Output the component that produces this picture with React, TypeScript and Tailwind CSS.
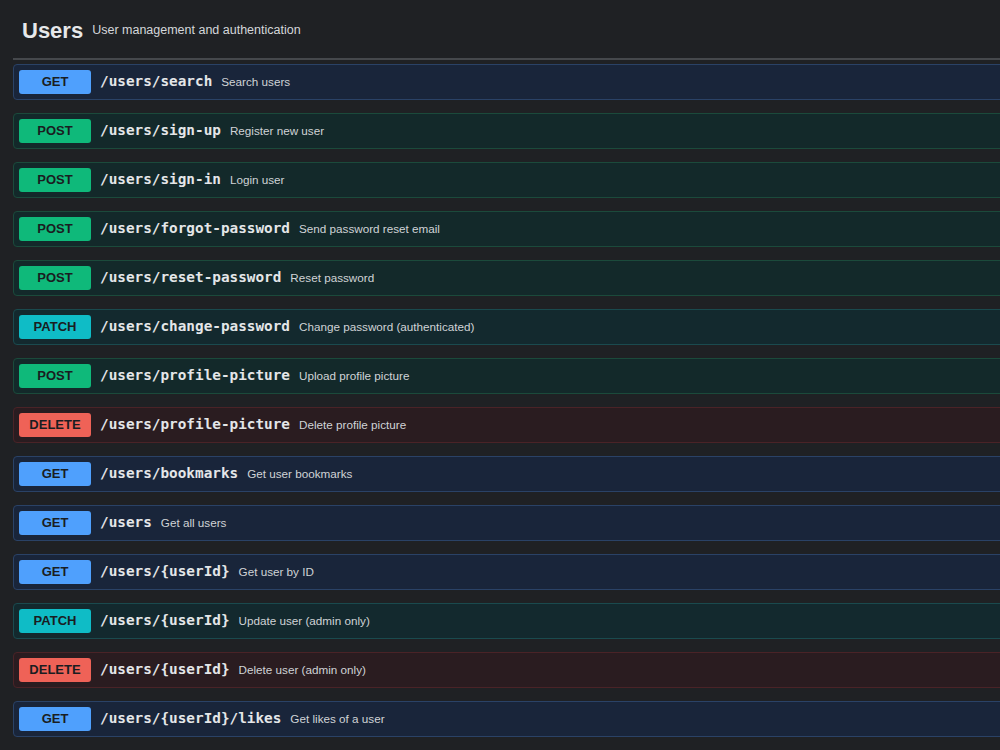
const endpoints: { method: string; path: string; summary: string }[] = [
  { method: "GET", path: "/users/search", summary: "Search users" },
  { method: "POST", path: "/users/sign-up", summary: "Register new user" },
  { method: "POST", path: "/users/sign-in", summary: "Login user" },
  { method: "POST", path: "/users/forgot-password", summary: "Send password reset email" },
  { method: "POST", path: "/users/reset-password", summary: "Reset password" },
  { method: "PATCH", path: "/users/change-password", summary: "Change password (authenticated)" },
  { method: "POST", path: "/users/profile-picture", summary: "Upload profile picture" },
  { method: "DELETE", path: "/users/profile-picture", summary: "Delete profile picture" },
  { method: "GET", path: "/users/bookmarks", summary: "Get user bookmarks" },
  { method: "GET", path: "/users", summary: "Get all users" },
  { method: "GET", path: "/users/{userId}", summary: "Get user by ID" },
  { method: "PATCH", path: "/users/{userId}", summary: "Update user (admin only)" },
  { method: "DELETE", path: "/users/{userId}", summary: "Delete user (admin only)" },
  { method: "GET", path: "/users/{userId}/likes", summary: "Get likes of a user" },
];

// стили для каждого метода
const methodStyles: Record<string, { row: string; badge: string }> = {
  GET: { row: "bg-[#19253a] border-[#2a4266]", badge: "bg-[#4fa0fd]" },
  POST: { row: "bg-[#13292a] border-[#1b4a3b]", badge: "bg-[#0fb97a]" },
  PATCH: { row: "bg-[#13292e] border-[#1a4a4e]", badge: "bg-[#0fbcc6]" },
  DELETE: { row: "bg-[#2a1c20] border-[#4a2327]", badge: "bg-[#ef6257]" },
};

const App = () => {
  return (
    <div className="w-[1000px] h-[750px] overflow-hidden bg-[#1f2124] font-['Liberation_Sans',Arial,sans-serif]">
      {/* Заголовок тега */}
      <div className="flex items-center gap-[9px] pl-[22px] pt-[2px] h-[58px]">
        <h2 className="text-[22px] font-bold text-[#e6e8ea]">Users</h2>
        <span className="text-[12.5px] text-[#d4d7da]">User management and authentication</span>
      </div>
      <div className="ml-[13px] h-[2px] bg-[#45484c]" />

      {/* Список эндпоинтов */}
      <div className="pl-[13px] pt-[4px] -mr-[20px]">
        {endpoints.map((e, i) => {
          const s = methodStyles[e.method];
          return (
            <div
              key={i}
              className={`flex items-center h-[36px] mb-[13px] px-[5px] border rounded-[4px] ${s.row}`}
            >
              <span
                className={`w-[72px] h-[24px] shrink-0 flex items-center justify-center rounded-[3px] text-[13px] font-bold text-[#1a1d21] ${s.badge}`}
              >
                {e.method}
              </span>
              <span className="ml-[9px] font-['DejaVu_Sans_Mono',monospace] font-bold text-[14.35px] text-[#e4e6e8]">
                {e.path}
              </span>
              <span className="ml-[9px] text-[11.7px] text-[#d0d3d6]">{e.summary}</span>
            </div>
          );
        })}
      </div>
    </div>
  );
};

export default App;
